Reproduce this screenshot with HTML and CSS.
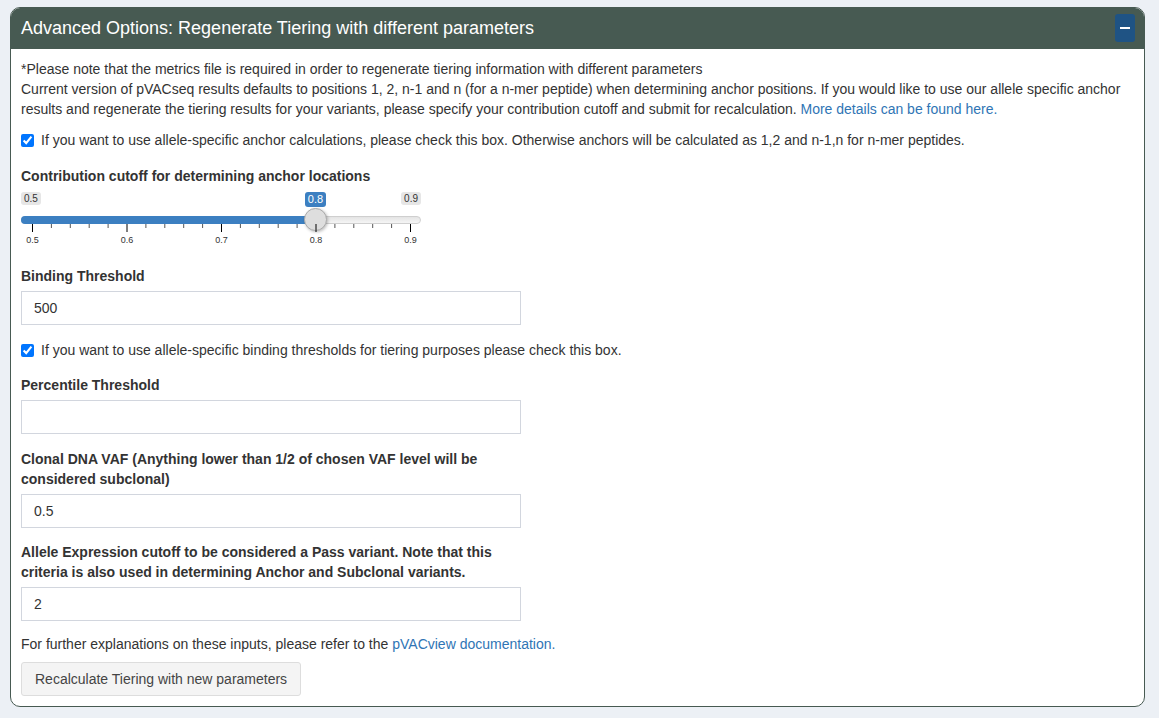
FILE: index.html
```html
<!DOCTYPE html>
<html lang="en">
<head>
<meta charset="utf-8">
<title>Advanced Options</title>
<link rel="stylesheet" href="styles.css">
</head>
<body>
<div class="box">
  <div class="box-header">
    <h3 class="box-title">Advanced Options: Regenerate Tiering with different parameters</h3>
    <button class="btn-collapse" type="button" aria-label="Collapse"><span class="minus"></span></button>
  </div>
  <div class="box-body">
    <p class="note">*Please note that the metrics file is required in order to regenerate tiering information with different parameters<br>Current version of pVACseq results defaults to positions 1, 2, n-1 and n (for a n-mer peptide) when determining anchor positions. If you would like to use our allele specific anchor results and regenerate the tiering results for your variants, please specify your contribution cutoff and submit for recalculation. <a href="#">More details can be found here.</a></p>

    <div class="checkbox first">
      <label><input type="checkbox" checked><span>If you want to use allele-specific anchor calculations, please check this box. Otherwise anchors will be calculated as 1,2 and n-1,n for n-mer peptides.</span></label>
    </div>

    <div class="form-group slider-group">
      <label class="control-label slider-label">Contribution cutoff for determining anchor locations</label>
      <div class="irs">
        <span class="irs-min">0.5</span>
        <span class="irs-max">0.9</span>
        <span class="irs-single">0.8</span>
        <span class="irs-line"></span>
        <span class="irs-bar"></span>
        <span class="irs-handle"></span>
        <svg class="irs-grid" width="400" height="26" viewBox="0 0 400 26">
          <g stroke="#000" stroke-width="1">
            <line x1="11.5" y1="1" x2="11.5" y2="9"/>
            <line x1="106" y1="1" x2="106" y2="9"/>
            <line x1="200.5" y1="1" x2="200.5" y2="9"/>
            <line x1="295" y1="1" x2="295" y2="9"/>
            <line x1="389.5" y1="1" x2="389.5" y2="9"/>
          </g>
          <g stroke="#555" stroke-width="1">
            <line x1="30.4" y1="1" x2="30.4" y2="5"/>
            <line x1="49.3" y1="1" x2="49.3" y2="5"/>
            <line x1="68.2" y1="1" x2="68.2" y2="5"/>
            <line x1="87.1" y1="1" x2="87.1" y2="5"/>
            <line x1="124.9" y1="1" x2="124.9" y2="5"/>
            <line x1="143.8" y1="1" x2="143.8" y2="5"/>
            <line x1="162.7" y1="1" x2="162.7" y2="5"/>
            <line x1="181.6" y1="1" x2="181.6" y2="5"/>
            <line x1="219.4" y1="1" x2="219.4" y2="5"/>
            <line x1="238.3" y1="1" x2="238.3" y2="5"/>
            <line x1="257.2" y1="1" x2="257.2" y2="5"/>
            <line x1="276.1" y1="1" x2="276.1" y2="5"/>
            <line x1="313.9" y1="1" x2="313.9" y2="5"/>
            <line x1="332.8" y1="1" x2="332.8" y2="5"/>
            <line x1="351.7" y1="1" x2="351.7" y2="5"/>
            <line x1="370.6" y1="1" x2="370.6" y2="5"/>
          </g>
          <g class="grid-text" text-anchor="middle">
            <text x="11.5" y="20">0.5</text>
            <text x="106" y="20">0.6</text>
            <text x="200.5" y="20">0.7</text>
            <text x="295" y="20">0.8</text>
            <text x="389.5" y="20">0.9</text>
          </g>
        </svg>
      </div>
    </div>

    <div class="form-group">
      <label class="control-label">Binding Threshold</label>
      <input class="form-control" type="number" value="500">
    </div>

    <div class="checkbox">
      <label><input type="checkbox" checked><span>If you want to use allele-specific binding thresholds for tiering purposes please check this box.</span></label>
    </div>

    <div class="form-group">
      <label class="control-label">Percentile Threshold</label>
      <input class="form-control" type="number" value="">
    </div>

    <div class="form-group clonal">
      <label class="control-label">Clonal DNA VAF (Anything lower than 1/2 of chosen VAF level will be considered subclonal)</label>
      <input class="form-control" type="number" value="0.5">
    </div>

    <div class="form-group last">
      <label class="control-label">Allele Expression cutoff to be considered a Pass variant. Note that this criteria is also used in determining Anchor and Subclonal variants.</label>
      <input class="form-control" type="number" value="2">
    </div>

    <p class="explain">For further explanations on these inputs, please refer to the <a href="#">pVACview documentation.</a></p>

    <button class="btn-default" type="button">Recalculate Tiering with new parameters</button>
  </div>
</div>
</body>
</html>
```

FILE: styles.css
```css
* {
  box-sizing: border-box;
}

html, body {
  margin: 0;
  padding: 0;
  background: #ecf0f5;
}

body {
  padding: 7px 14px 12px 10px;
  font-family: "Liberation Sans", Arial, Helvetica, sans-serif;
  font-size: 14px;
  line-height: 20px;
  color: #333;
}

a {
  color: #2f75b5;
  text-decoration: none;
}

.box {
  border: 1px solid #475a52;
  border-radius: 10px;
  background: #fff;
  overflow: hidden;
}

.box-header {
  display: flex;
  align-items: center;
  justify-content: space-between;
  height: 42px;
  margin: -1px -1px 0 -1px;
  padding: 0 10px 0 11px;
  background: #475a52;
  border-radius: 10px 10px 0 0;
}

.box-title {
  margin: 0;
  font-size: 18px;
  font-weight: normal;
  line-height: 22px;
  color: #fff;
}

.btn-collapse {
  width: 20px;
  height: 28px;
  padding: 0;
  border: none;
  border-radius: 3px;
  background: #1f5384;
  display: flex;
  align-items: center;
  justify-content: center;
}

.minus {
  display: block;
  width: 10px;
  height: 2px;
  background: #fff;
}

.box-body {
  padding: 10px;
}

.note {
  margin: 0;
}

.checkbox {
  margin: 0 0 15px 0;
}

.checkbox.first {
  margin: 11px 0 16px 0;
}

.checkbox label {
  display: flex;
  align-items: center;
  gap: 7px;
  font-weight: normal;
}

.checkbox input {
  margin: 0;
  width: 13px;
  height: 13px;
  flex: none;
}

.form-group {
  width: 500px;
  margin-bottom: 15px;
}

.form-group.clonal {
  margin-bottom: 14px;
}

.form-group.last {
  margin-bottom: 13px;
}

.control-label {
  display: block;
  font-weight: bold;
  margin-bottom: 5px;
}

.slider-group {
  width: 500px;
  margin-bottom: 19px;
}

.slider-label {
  margin-bottom: 6px;
}

.form-control {
  display: block;
  width: 500px;
  height: 34px;
  padding: 6px 12px;
  border: 1px solid #d2d6de;
  border-radius: 0;
  font-family: inherit;
  font-size: 14px;
  color: #333;
  background: #fff;
  -moz-appearance: textfield;
  appearance: textfield;
}

.form-control::-webkit-inner-spin-button,
.form-control::-webkit-outer-spin-button {
  -webkit-appearance: none;
  margin: 0;
}

/* slider */
.irs {
  position: relative;
  width: 400px;
  height: 55px;
}

.irs-min,
.irs-max,
.irs-single {
  position: absolute;
  top: 0;
  font-size: 10px;
  line-height: 13px;
  padding: 0 3px;
  border-radius: 3px;
  background: #e6e6e6;
  color: #333;
}

.irs-min {
  left: 0;
}

.irs-max {
  right: 0;
}

.irs-single {
  left: 284px;
  width: 21px;
  padding: 1px 0;
  text-align: center;
  font-size: 11px;
  background: #3c7fc1;
  color: #fff;
  border-radius: 3px;
}

.irs-line {
  position: absolute;
  top: 24px;
  left: 0;
  width: 400px;
  height: 8px;
  border-radius: 4px;
  background: linear-gradient(#e4e4e4, #f5f5f5);
  border: 1px solid #cfcfcf;
}

.irs-bar {
  position: absolute;
  top: 24px;
  left: 0;
  width: 295px;
  height: 8px;
  border-radius: 4px 0 0 4px;
  background: #3c7fc1;
}

.irs-handle {
  position: absolute;
  top: 16px;
  left: 283px;
  width: 23px;
  height: 23px;
  border-radius: 50%;
  background: #dedede;
  border: 1px solid #ababab;
  box-shadow: 1px 1px 3px rgba(0, 0, 0, 0.25);
}

.irs-grid {
  position: absolute;
  top: 31px;
  left: 0;
  display: block;
}

.grid-text {
  font-family: "Liberation Sans", Arial, sans-serif;
  font-size: 9px;
  fill: #333;
}

.explain {
  margin: 0 0 8px 0;
}

.btn-default {
  display: block;
  height: 34px;
  padding: 6px 13px;
  border: 1px solid #ddd;
  border-radius: 3px;
  background: #f4f4f4;
  color: #444;
  font-family: inherit;
  font-size: 14px;
  line-height: 20px;
}
```
